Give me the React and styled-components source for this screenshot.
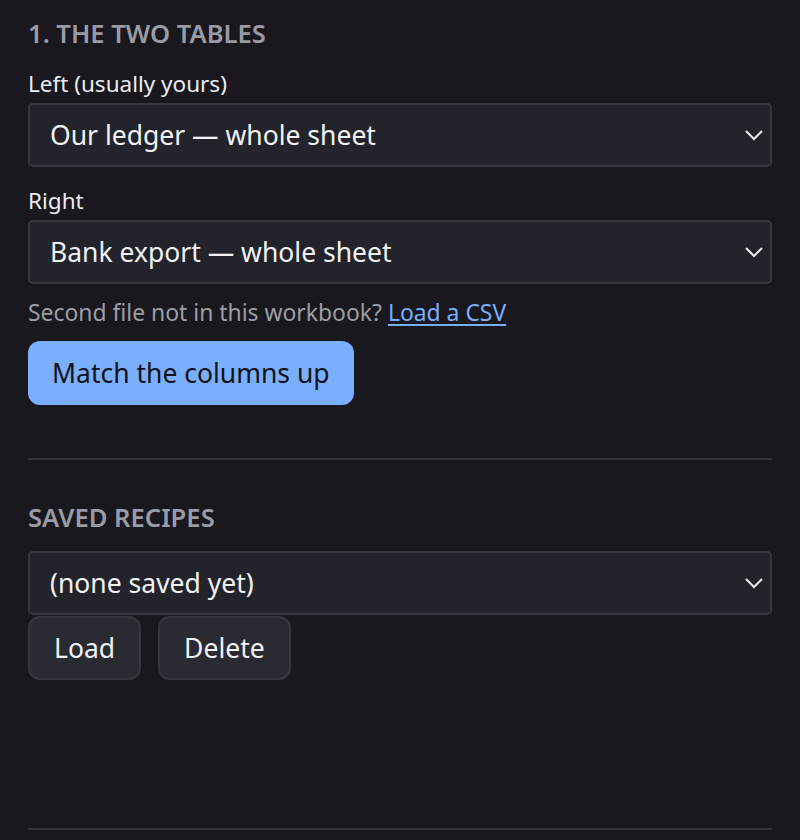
import React from "react";
import styled, { createGlobalStyle } from "styled-components";

const Global = createGlobalStyle`
  html, body { margin: 0; padding: 0; background: #18181e; }
  body { font-family: "Noto Sans", "Open Sans", sans-serif; color: #ececf0; }
  * { box-sizing: border-box; }
`;

const Panel = styled.div`
  padding: 19px 28px 0 28px;
  display: flex;
  flex-direction: column;
  min-height: 840px;
`;

const Section = styled.section`
  display: flex;
  flex-direction: column;
`;

const Heading = styled.h2`
  margin: 0 0 18px 0;
  font-size: 25.6px;
  line-height: 30px;
  font-weight: 600;
  letter-spacing: 0;
  color: #9b9ba6;
  text-transform: uppercase;
`;

const Label = styled.label`
  font-size: 22.5px;
  line-height: 30px;
  color: #ececf0;
  margin-bottom: 4px;
  margin-top: ${(p) => p.$top ?? 2}px;
`;

const SelectWrap = styled.div`
  position: relative;
  width: 100%;
`;

const Select = styled.select`
  appearance: none;
  -webkit-appearance: none;
  width: 100%;
  height: 64px;
  padding: 0 60px 0 20px;
  background: #23232b;
  border: 2px solid #37373f;
  border-radius: 5px;
  color: #f2f2f5;
  font-family: inherit;
  font-size: 26.5px;
  outline: none;
`;

const Chevron = styled.svg`
  position: absolute;
  right: 8px;
  top: 50%;
  transform: translateY(-50%);
  pointer-events: none;
`;

const Hint = styled.p`
  margin: 14px 0 13px 0;
  font-size: 22.9px;
  line-height: 30px;
  color: #9d9da6;
`;

const Link = styled.a`
  color: #7aaeff;
  text-decoration: underline;
  text-decoration-thickness: 2px;
  text-underline-offset: 3px;
`;

const Row = styled.div`
  display: flex;
  gap: 17px;
  margin-top: 1px;
`;

const Button = styled.button`
  align-self: flex-start;
  height: 64px;
  padding: 0 24px;
  border-radius: 12px;
  font-family: inherit;
  font-size: 26.5px;
  cursor: pointer;
  background: ${(p) => (p.$primary ? "#7aaeff" : "#2a2a32")};
  color: ${(p) => (p.$primary ? "#111116" : "#f2f2f5")};
  border: ${(p) => (p.$primary ? "none" : "2px solid #36363e")};
`;

const Divider = styled.hr`
  width: 100%;
  border: none;
  height: 2px;
  background: #333339;
  margin: ${(p) => p.$m};
`;

function Dropdown({ value }) {
  return (
    <SelectWrap>
      <Select defaultValue={value}>
        <option>{value}</option>
      </Select>
      <Chevron width="20" height="12" viewBox="0 0 20 12">
        <path d="M2 2 L10 10 L18 2" fill="none" stroke="#ececf0" strokeWidth="2" />
      </Chevron>
    </SelectWrap>
  );
}

export default function App() {
  return (
    <>
      <Global />
      <Panel>
        <Section>
          <Heading>1. The two tables</Heading>
          <Label>Left (usually yours)</Label>
          <Dropdown value="Our ledger — whole sheet" />
          <Label $top={19}>Right</Label>
          <Dropdown value="Bank export — whole sheet" />
          <Hint>
            Second file not in this workbook? <Link href="#">Load a CSV</Link>
          </Hint>
          <Button $primary>Match the columns up</Button>
        </Section>
        <Divider $m="53px 0 43px 0" />
        <Section>
          <Heading>Saved recipes</Heading>
          <Dropdown value="(none saved yet)" />
          <Row>
            <Button>Load</Button>
            <Button>Delete</Button>
          </Row>
        </Section>
        <Divider $m="148px 0 0 0" />
      </Panel>
    </>
  );
}
